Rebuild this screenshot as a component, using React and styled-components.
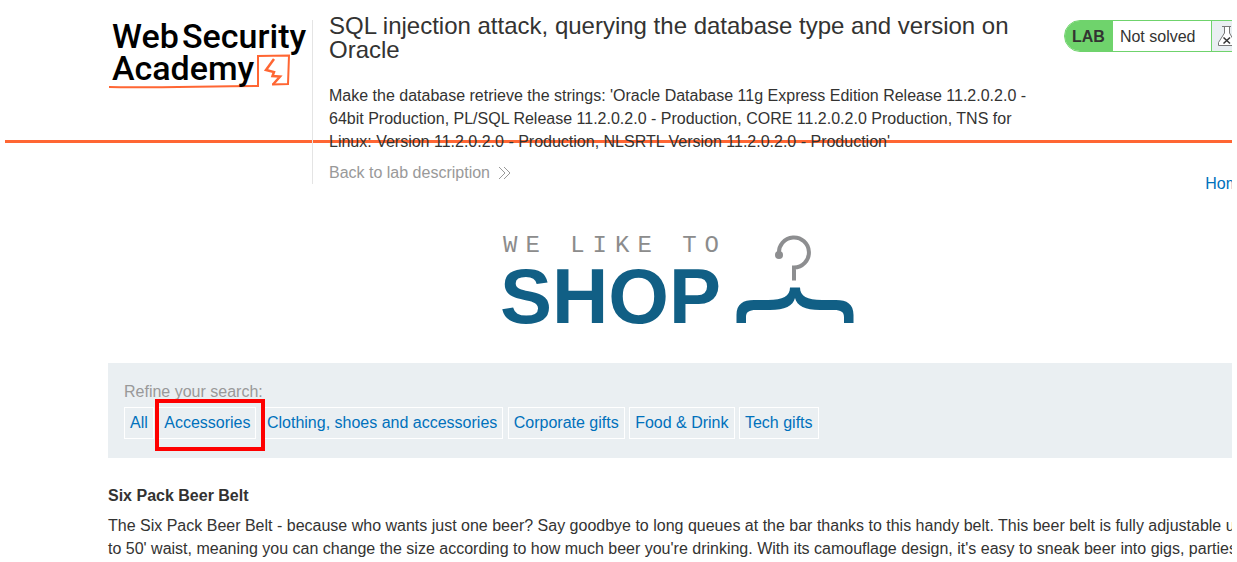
import React from "react";
import styled, { createGlobalStyle } from "styled-components";

const GlobalStyle = createGlobalStyle`
  *, *::before, *::after { box-sizing: border-box; }
  body {
    margin: 0;
    background: #fff;
    color: #333332;
    font-family: Arial, "Liberation Sans", sans-serif;
    font-size: 16px;
    line-height: 22px;
  }
  h1, h2, h3, p { margin: 0; font-weight: normal; }
  a { color: #0071bc; text-decoration: none; }
`;

const Frame = styled.div`
  margin: 0 5px;
  overflow: hidden;
`;

const Container = styled.div`
  min-width: 1243px;
  padding-left: 103px;
`;

const Header = styled.header`
  height: 143px;
  padding-top: 20px;
  border-bottom: 3px solid #ff6633;
`;

const HeaderRow = styled(Container)`
  display: flex;
  align-items: flex-start;
`;

const LogoLink = styled.a`
  flex: 0 0 205px;
  height: 164px;
  border-right: 1px solid #e4e4e4;
`;

const LogoSvg = styled.svg`
  display: block;
  overflow: visible;
`;

const Description = styled.div`
  flex: 1;
  margin: -6px 24px 0 16px;
`;

const Title = styled.h1`
  margin-bottom: 22px;
  font-size: 24px;
  line-height: 24px;
`;

const Task = styled.p`
  line-height: 23px;
`;

const BackLink = styled.a`
  display: flex;
  align-items: center;
  gap: 8px;
  margin-top: 9px;
  color: #999;
`;

const Status = styled.div`
  display: flex;
  flex: 0 0 184px;
  height: 32px;
  border: 1px solid #6fd36c;
  border-radius: 16px;
  overflow: hidden;
  line-height: 30px;
`;

const StatusTag = styled.strong`
  padding: 1px 8px 0 7px;
  background: #6fd36c;
`;

const StatusText = styled.span`
  flex: 1;
  padding: 1px 0 0 7px;
`;

const StatusIcon = styled.span`
  width: 36px;
  padding: 4px 5px;
  border-left: 1px solid #6fd36c;
  background: #eaeff2;

  svg { display: block; }
`;

const Nav = styled.nav`
  display: flex;
  justify-content: flex-end;
  margin: 30px 0 40px;
`;

const Banner = styled.div`
  display: flex;
  justify-content: center;
  margin-bottom: 38px;
`;

const Filters = styled.section`
  padding: 18px 16px 19px;
  background: #eaeff2;
`;

const FilterLabel = styled.p`
  margin-bottom: 4px;
  color: #999;
`;

const FilterLink = styled.a`
  position: relative;
  display: inline-block;
  padding: 4px 5px;
  border: 1px solid #fff;
  line-height: 22px;
`;

const Highlight = styled.span`
  position: absolute;
  z-index: 1;
  inset: -9px -10px -13px -4px;
  border: 4px solid #fe0000;
  pointer-events: none;
`;

const Product = styled.article`
  padding-top: 27px;
`;

const ProductName = styled.h3`
  margin-bottom: 7px;
  font-size: 16px;
  font-weight: bold;
`;

const ProductText = styled.p`
  line-height: 23px;
`;

const categories = [
  "All",
  "Accessories",
  "Clothing, shoes and accessories",
  "Corporate gifts",
  "Food & Drink",
  "Tech gifts",
];

function AcademyLogo() {
  return (
    <LogoSvg width="204" height="72" viewBox="0 0 204 72" aria-label="Web Security Academy">
      <g fill="none" stroke="#ff6633" strokeWidth="2">
        <path d="M1 67 C45 68 100 66 150 66 L150 36 L181 35.500 L180 64 L164 64.500" />
        <path d="M166 39 L158 50 L166 52 L164.500 56 L172 56.500 L165 64.500" strokeWidth="2.500" />
      </g>
      <g fill="#000" fontFamily="Roboto, sans-serif" fontSize="34" fontWeight="500">
        <text x="4" y="28">Web</text>
        <text x="74" y="28">Security</text>
        <text x="4" y="60">Academy</text>
      </g>
    </LogoSvg>
  );
}

function FlaskIcon() {
  return (
    <svg width="20" height="22" viewBox="0 0 20 22" fill="none" stroke="#777">
      <path d="M5 1.500H14M7.500 2V8L1.500 17.500V20.500H18V17.500L12.500 8V2" fill="#fff" />
      <path d="M6.500 12.500L13 18.500M13 12.500L6.500 18.500" stroke="#333" strokeWidth="1.500" />
    </svg>
  );
}

function ShopLogo() {
  return (
    <LogoSvg width="352" height="90" viewBox="0 0 352 90" aria-label="We like to shop">
      <text x="1" y="17" fill="#8c8c8c" fontFamily='"Liberation Mono", monospace' fontSize="24" letterSpacing="8">
        WE LIKE TO
      </text>
      <text x="-2" y="88" fill="#115f85" fontFamily='"Liberation Sans", sans-serif' fontSize="78" fontWeight="bold">
        SHOP
      </text>
      <circle cx="277" cy="20" r="4" fill="#8d8e90" />
      <path d="M277 19 A15 15 0 1 1 292 32.500 V45.500" fill="none" stroke="#8d8e90" strokeWidth="4" />
      <path
        d="M234.500 88V80C234.500 69 241 65 252 65H266C281 65 288 61 288 52.500H298C298 61 305 65 320 65H334C345 65 351.500 69 351.500 80V88H342V82C342 77 339 75 332 75H318C303 75 295 71 293 63C291 71 283 75 268 75H254C247 75 244 77 244 82V88Z"
        fill="#115f85"
      />
    </LogoSvg>
  );
}

export default function App() {
  return (
    <>
      <GlobalStyle />
      <Frame>
        <Header>
          <HeaderRow>
            <LogoLink href="#"><AcademyLogo /></LogoLink>
            <Description>
              <Title>SQL injection attack, querying the database type and version on Oracle</Title>
              <Task>
                Make the database retrieve the strings: 'Oracle Database 11g Express Edition Release
                11.2.0.2.0 - 64bit Production, PL/SQL Release 11.2.0.2.0 - Production, CORE 11.2.0.2.0
                Production, TNS for Linux: Version 11.2.0.2.0 - Production, NLSRTL Version 11.2.0.2.0 -
                Production'
              </Task>
              <BackLink href="#">
                Back to lab description
                <svg width="14" height="14" viewBox="0 0 14 14" fill="none" stroke="#999">
                  <path d="M1 1L7 7L1 13M6 1L12 7L6 13" />
                </svg>
              </BackLink>
            </Description>
            <Status>
              <StatusTag>LAB</StatusTag>
              <StatusText>Not solved</StatusText>
              <StatusIcon><FlaskIcon /></StatusIcon>
            </Status>
          </HeaderRow>
        </Header>
        <Container as="main">
          <Nav><a href="#">Home</a></Nav>
          <Banner><ShopLogo /></Banner>
          <Filters>
            <FilterLabel>Refine your search:</FilterLabel>
            {categories.map((name) => (
              <React.Fragment key={name}>
                <FilterLink href="#">
                  {name}
                  {name === "Accessories" && <Highlight />}
                </FilterLink>{" "}
              </React.Fragment>
            ))}
          </Filters>
          <Product>
            <ProductName>Six Pack Beer Belt</ProductName>
            <ProductText>
              The Six Pack Beer Belt - because who wants just one beer? Say goodbye to long queues at the
              bar thanks to this handy belt. This beer belt is fully adjustable up to 50' waist, meaning
              you can change the size according to how much beer you're drinking. With its camouflage
              design, it's easy to sneak beer into gigs, parties
            </ProductText>
          </Product>
        </Container>
      </Frame>
    </>
  );
}
